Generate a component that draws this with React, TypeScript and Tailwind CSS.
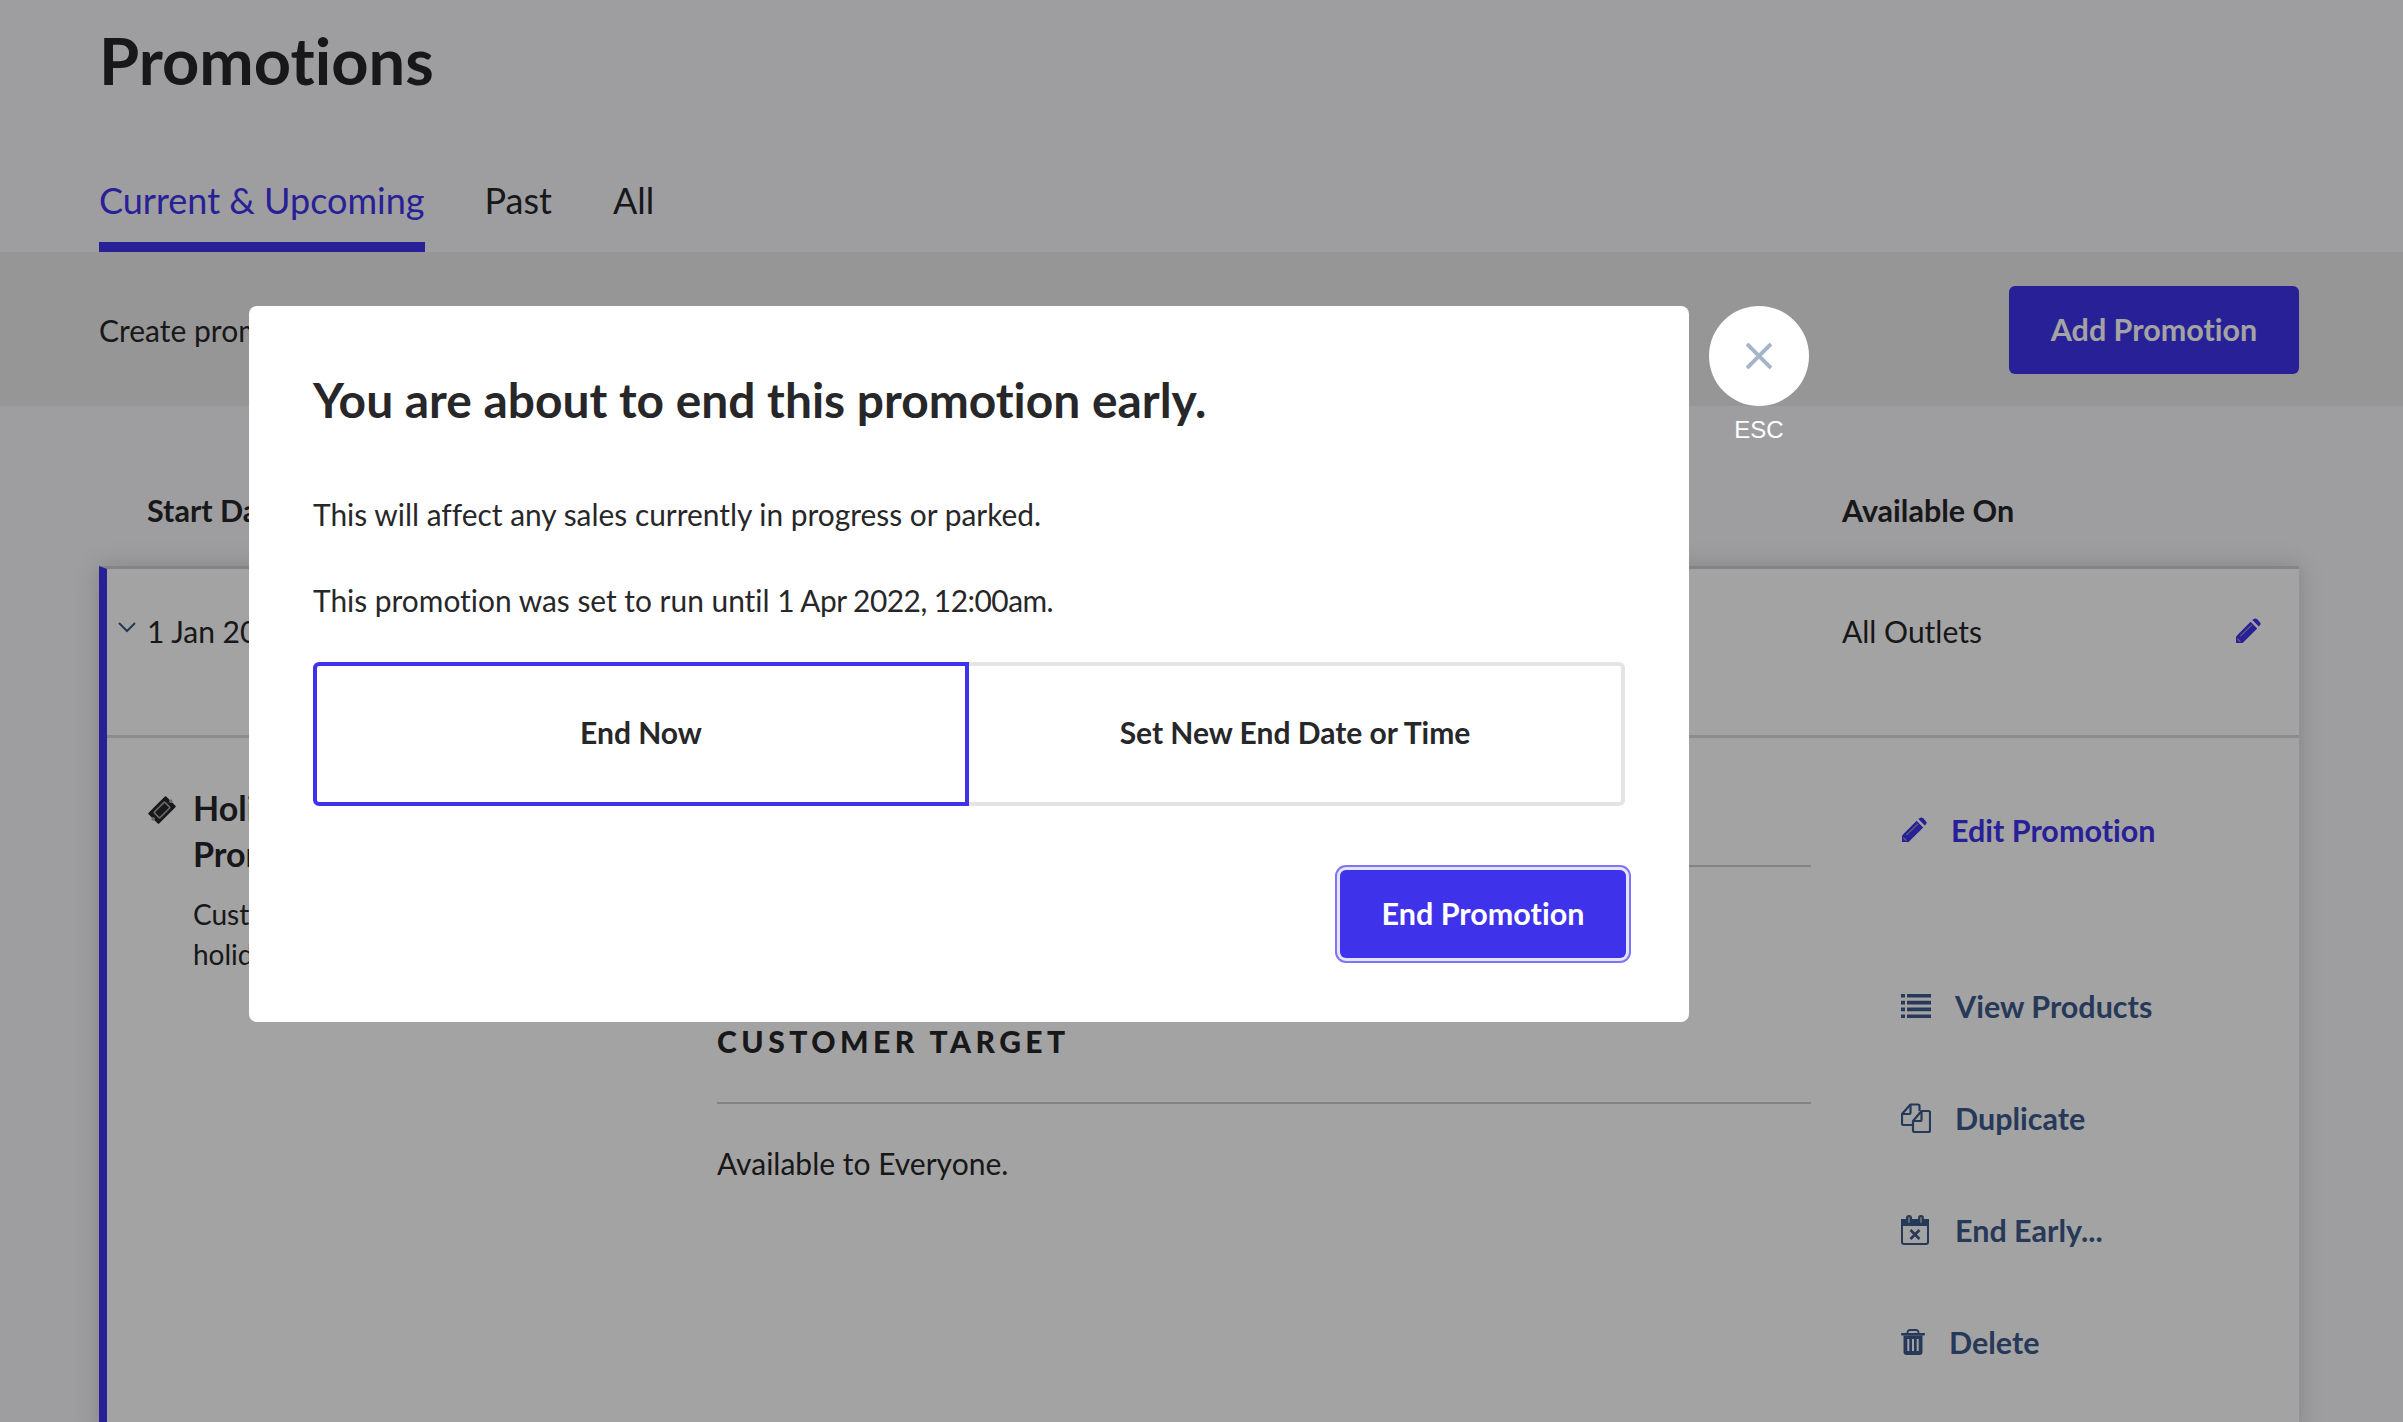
import React from "react";

const lato = "font-['Lato','Liberation_Sans',sans-serif]";

const PencilIcon = ({ className }: { className?: string }) => (
  <svg viewBox="0 0 26 26" className={className} fill="currentColor">
    <path d="M17.6 2.2l.9-.9a2.6 2.6 0 0 1 3.6 0l2.6 2.6a2.6 2.6 0 0 1 0 3.6l-.9.9z" />
    <path d="M15.6 3.8l6.6 6.6L7.6 25H1v-6.6z" />
    <path d="M5 17.8L16.6 6.4l.8.8L5.8 18.6z" fill="#a4a4a4" />
    <path d="M2.6 20l3.4 3.4-1.4.3-2.3-2.3z" fill="#a4a4a4" />
  </svg>
);

const ListIcon = ({ className }: { className?: string }) => (
  <svg viewBox="0 0 30 24" className={className} fill="currentColor">
    <path d="M0 0h4v3.6H0zM6 0h24v3.6H6zM0 6.8h4v3.6H0zM6 6.8h24v3.6H6zM0 13.6h4v3.6H0zM6 13.6h24v3.6H6zM0 20.4h4V24H0zM6 20.4h24V24H6z" />
  </svg>
);

const DuplicateIcon = ({ className }: { className?: string }) => (
  <svg viewBox="0 0 30 30" className={className} fill="none" stroke="currentColor" strokeWidth="2.2" strokeLinejoin="round">
    <path d="M11 22H2.5A1.5 1.5 0 0 1 1 20.500V11l8.500-9.500H17a1.500 1.500 0 0 1 1.500 1.500v5" />
    <path d="M9.500 1.500V10a1 1 0 0 1-1 1H1" />
    <path d="M12 18l8.500-10H27.500A1.500 1.500 0 0 1 29 9.500V27.500A1.500 1.500 0 0 1 27.500 29H13.500A1.500 1.500 0 0 1 12 27.500z" />
    <path d="M20.500 8v9a1 1 0 0 1-1 1H12" />
  </svg>
);

const CalendarXIcon = ({ className }: { className?: string }) => (
  <svg viewBox="0 0 28 30" className={className} fill="none" stroke="currentColor">
    <rect x="1" y="5" width="26" height="24" rx="2" strokeWidth="2" />
    <path d="M1 5h26v5H1z" fill="currentColor" strokeWidth="2" />
    <rect x="6" y="1" width="4" height="8" rx="2" fill="#a4a4a4" strokeWidth="2" />
    <rect x="18" y="1" width="4" height="8" rx="2" fill="#a4a4a4" strokeWidth="2" />
    <path d="M9.500 15l9 9M18.500 15l-9 9" strokeWidth="2.600" />
  </svg>
);

const TrashIcon = ({ className }: { className?: string }) => (
  <svg viewBox="0 0 24 26" className={className} fill="currentColor">
    <path d="M6.500 5V3.500A2.500 2.500 0 0 1 9 1h6a2.500 2.500 0 0 1 2.500 2.500V5" fill="none" stroke="currentColor" strokeWidth="1.800" />
    <rect x="0" y="4" width="24" height="2.600" rx="1" />
    <path
      fillRule="evenodd"
      d="M2.500 6.500h19V23a3 3 0 0 1-3 3h-13a3 3 0 0 1-3-3zM6.300 10v12h2V10zm4.700 0v12h2V10zm4.700 0v12h2V10z"
    />
  </svg>
);

const TicketIcon = ({ className }: { className?: string }) => (
  <svg viewBox="0 0 30 30" className={className}>
    <g transform="rotate(-45 15 15)">
      <rect x="2.500" y="7.500" width="25" height="15" rx="1" fill="currentColor" />
      <circle cx="2.500" cy="15" r="1.800" fill="#a4a4a4" />
      <circle cx="27.500" cy="15" r="1.800" fill="#a4a4a4" />
      <rect x="7.500" y="11" width="15" height="8" rx="1" fill="currentColor" stroke="#a4a4a4" strokeWidth="1.600" />
    </g>
  </svg>
);

const ActionRow = ({
  icon,
  label,
  labelClass,
  blue,
}: {
  icon: React.ReactNode;
  label: string;
  labelClass: string;
  blue?: boolean;
}) => (
  <div className={`flex items-center ${blue ? "text-[#3f32eb]" : "text-[#3c5a8c]"}`}>
    <span className="flex w-[50px] shrink-0 items-center">{icon}</span>
    <span className={`text-[30.5px] leading-[38px] font-bold ${labelClass}`}>{label}</span>
  </div>
);

const App = () => {
  return (
    <div className={`relative h-[1422px] overflow-hidden bg-[#f7f7fa] text-[#27272a] [font-variant-ligatures:none] ${lato}`}>
      {/* page under the modal */}
      <div className="pl-[99px] pr-[104px]">
        <h1 className="pt-[22px] text-[65px] leading-[76px] font-bold text-[#27272a]">Promotions</h1>
        <div className="mt-[66px] flex h-[88px] gap-[60px] text-[36px] leading-[44px]">
          <div className="h-[88px] border-b-[10px] border-[#3f32eb] pt-[14px] text-[#3f32eb]">
            Current &amp; Upcoming
          </div>
          <div className="pt-[14px]">Past</div>
          <div className="ml-[1px] pt-[14px]">All</div>
        </div>
      </div>

      <div className="flex h-[154px] items-center justify-between bg-[#ebebed] pl-[99px] pr-[104px]">
        <span className="translate-y-[1px] text-[30px]">Create promotions to offer discounts to your customers.</span>
        <button className="h-[88px] w-[290px] translate-y-[1px] rounded-[6px] bg-[#3f32eb] text-[30.5px] font-bold text-white">
          Add Promotion
        </button>
      </div>

      <div className="pl-[99px] pr-[104px]">
        <div className="flex h-[160px] items-center pt-[50px] text-[30.5px] font-bold">
          <span className="ml-[48px] w-[1695px]">Start Date</span>
          <span>Available On</span>
        </div>

        <div className="border-t-[3px] border-l-[8px] border-t-[#cfcfd2] border-l-[#3f32eb] bg-white shadow-[0_0_24px_rgba(0,0,0,0.16)]">
          <div className="flex h-[169px] border-b-[3px] border-[#dcdcde] pt-[43px] text-[30px] leading-[38px]">
            <svg viewBox="0 0 18 11" className="mt-[10px] ml-[11px] h-[11px] w-[18px] text-[#3c5a8c]" fill="none" stroke="currentColor" strokeWidth="2">
              <path d="M1 1l8 8 8-8" />
            </svg>
            <span className="ml-[11px] w-[1695px]">1 Jan 2022, 12:00am</span>
            <span className="flex-1">All Outlets</span>
            <PencilIcon className="mt-[6px] mr-[38px] h-[26px] w-[26px] text-[#3f32eb]" />
          </div>

          <div className="flex h-[700px]">
            <div className="flex w-[610px] shrink-0 pt-[47px] pl-[40px]">
              <TicketIcon className="mt-[10px] h-[30px] w-[30px] shrink-0 text-[#27272a]" />
              <div className="ml-[16px] w-[280px]">
                <h3 className="text-[34px] leading-[46px] font-bold">Holiday Promotion</h3>
                <p className="mt-[17px] text-[28px] leading-[40px]">
                  Customers save on
                  <br />
                  holiday purchases.
                </p>
              </div>
            </div>

            <div className="w-[1094px] shrink-0 pt-[80px]">
              <div className="h-[49px] border-b-[2px] border-[#cfcfd2]" />
              <h4 className="mt-[156px] text-[30px] leading-[36px] font-black tracking-[0.15em]">CUSTOMER TARGET</h4>
              <div className="mt-[43px] border-b-[2px] border-[#cfcfd2]" />
              <p className="mt-[40px] text-[30px] leading-[38px]">Available to Everyone.</p>
            </div>

            <div className="flex flex-col pt-[73px] pl-[90px]">
              <ActionRow blue label="Edit Promotion" labelClass="" icon={<PencilIcon className="h-[26px] w-[26px]" />} />
              <div className="mt-[138px] flex flex-col gap-[74px]">
                <ActionRow label="View Products" labelClass="ml-[4px]" icon={<ListIcon className="h-[24px] w-[30px]" />} />
                <ActionRow label="Duplicate" labelClass="ml-[4px]" icon={<DuplicateIcon className="h-[30px] w-[30px]" />} />
                <ActionRow label="End Early..." labelClass="ml-[4px]" icon={<CalendarXIcon className="h-[30px] w-[28px]" />} />
                <ActionRow label="Delete" labelClass="ml-[-2px]" icon={<TrashIcon className="h-[26px] w-[24px]" />} />
              </div>
            </div>
          </div>
        </div>
      </div>

      {/* dim layer */}
      <div className="absolute inset-0 bg-black/36" />

      {/* modal */}
      <div className="absolute top-[306px] left-[249px] h-[716px] w-[1440px] rounded-[8px] bg-white px-[64px] pt-[63px]">
        <h2 className="text-[47.9px] leading-[62px] font-bold text-[#27272a]">You are about to end this promotion early.</h2>
        <p className="mt-[64px] text-[29.9px] leading-[38px]">This will affect any sales currently in progress or parked.</p>
        <p className="mt-[48px] text-[29.9px] leading-[38px]">
          This promotion was set to run until <span className="tracking-[-0.5px]">1 Apr 2022, 12:00am.</span>
        </p>
        <div className="mt-[43px] flex h-[144px] text-[30px] font-bold">
          <button className="w-[656px] rounded-l-[6px] border-[4px] border-[#3f32eb] pb-[3px]">End Now</button>
          <button className="flex-1 rounded-r-[6px] border-[4px] border-l-0 border-[#e4e4e7] pb-[3px]">Set New End Date or Time</button>
        </div>
        <div className="mt-[64px] flex justify-end">
          <button className="h-[88px] w-[286px] translate-x-[1px] rounded-[6px] bg-[#3f32eb] text-[30.5px] font-bold text-white shadow-[0_0_0_3px_#e6e4fb,0_0_0_5px_#7d75f5]">
            End Promotion
          </button>
        </div>
      </div>

      {/* close button */}
      <div className="absolute top-[306px] left-[1709px] flex w-[100px] flex-col items-center">
        <div className="flex h-[100px] w-[100px] items-center justify-center rounded-full bg-white">
          <svg viewBox="0 0 26 26" className="h-[26px] w-[26px] text-[#a5b4c8]" fill="none" stroke="currentColor" strokeWidth="4">
            <path d="M1 1l24 24M25 1L1 25" />
          </svg>
        </div>
        <span className="mt-[10px] font-['Liberation_Sans',sans-serif] text-[24px] leading-[28px] text-white">ESC</span>
      </div>
    </div>
  );
};

export default App;
